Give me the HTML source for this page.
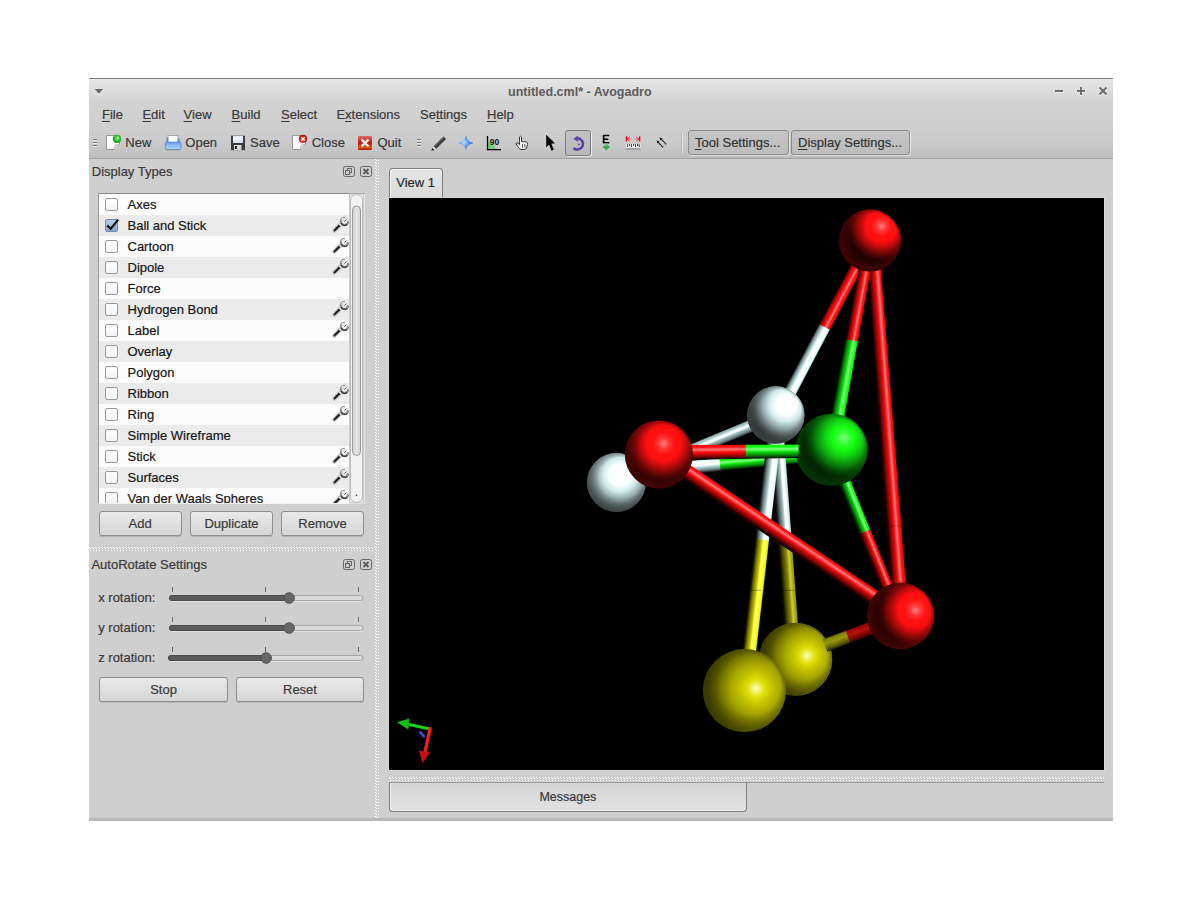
<!DOCTYPE html><html><head><meta charset="utf-8"><style>
html,body{margin:0;padding:0;}
body{width:1200px;height:900px;position:relative;overflow:hidden;background:#ffffff;font-family:"Liberation Sans",sans-serif;}
.t{position:absolute;white-space:nowrap;-webkit-text-stroke:0.2px currentColor;}
.a{position:absolute;}
u{text-decoration:underline;text-underline-offset:2px;}
.btn{position:absolute;box-sizing:border-box;border:1px solid #8e8e8e;border-radius:3px;background:linear-gradient(#e9e9e9,#d6d6d6);box-shadow:0 1px 0 rgba(0,0,0,0.12);}
.chk{position:absolute;box-sizing:border-box;width:13px;height:13px;border:1px solid #9a9a9a;border-radius:2px;background:linear-gradient(#ffffff,#f4f4f4);}
svg{position:absolute;overflow:visible;}
</style></head><body>

<div class="a" style="left:89px;top:78px;width:1024px;height:743px;background:#cfcfcf;"></div>
<div class="a" style="left:89px;top:78px;width:1024px;height:1px;background:#7c7c7c;"></div>
<div class="a" style="left:89px;top:79px;width:1024px;height:79px;background:linear-gradient(#f0f0f0 0px,#e4e4e4 1px,#dedede 10px,#d3d3d3 22px,#cfcfcf 45px,#cbcbcb 62px,#c4c4c4 72px,#bcbcbc 79px);"></div>
<div class="a" style="left:89px;top:158px;width:1024px;height:1px;background:#a2a2a2;"></div>
<div class="a" style="left:89px;top:818px;width:1024px;height:3px;background:#b8b8b8;"></div>
<div class="t" style="left:508px;top:84.37px;font-size:12.5px;line-height:16px;color:#5c5c5c;font-weight:bold;-webkit-text-stroke:0;">untitled.cml* - Avogadro</div>
<svg style="left:94px;top:88px" width="11" height="9"><path d="M1.2 5.6 L5 7.4 L8.8 5.6" fill="none" stroke="#f4f4f4" stroke-width="0.8" opacity="0.8"/><path d="M0.7 1 L9.1 1 L4.9 5.4 Z" fill="#6a6a6a"/></svg>
<svg style="left:1052px;top:84px" width="60" height="16"><g stroke="#ffffff" stroke-width="2" opacity="0.7" transform="translate(0,1)"><path d="M3 7 H11"/><path d="M25 7 H33 M29 3 V11"/><path d="M47.5 3.5 L54.5 10.5 M54.5 3.5 L47.5 10.5"/></g><g stroke="#6e6e6e" stroke-width="2"><path d="M3 7 H11"/><path d="M25 7 H33 M29 3 V11"/><path d="M47.5 3.5 L54.5 10.5 M54.5 3.5 L47.5 10.5"/></g></svg>
<div class="t" style="left:102px;top:107.20px;font-size:13px;line-height:16px;color:#393939;font-weight:normal;"><u>F</u>ile</div>
<div class="t" style="left:142.4px;top:107.20px;font-size:13px;line-height:16px;color:#393939;font-weight:normal;"><u>E</u>dit</div>
<div class="t" style="left:183.6px;top:107.20px;font-size:13px;line-height:16px;color:#393939;font-weight:normal;"><u>V</u>iew</div>
<div class="t" style="left:231.6px;top:107.20px;font-size:13px;line-height:16px;color:#393939;font-weight:normal;"><u>B</u>uild</div>
<div class="t" style="left:281px;top:107.20px;font-size:13px;line-height:16px;color:#393939;font-weight:normal;"><u>S</u>elect</div>
<div class="t" style="left:336.4px;top:107.20px;font-size:13px;line-height:16px;color:#393939;font-weight:normal;">E<u>x</u>tensions</div>
<div class="t" style="left:420px;top:107.20px;font-size:13px;line-height:16px;color:#393939;font-weight:normal;">Se<u>t</u>tings</div>
<div class="t" style="left:487px;top:107.20px;font-size:13px;line-height:16px;color:#393939;font-weight:normal;"><u>H</u>elp</div>
<svg style="left:93px;top:139px" width="6" height="10"><g fill="#7a7a7a"><rect x="0" y="0" width="4" height="1"/><rect x="0" y="3" width="4" height="1"/><rect x="0" y="6" width="4" height="1"/></g><g fill="#ececec"><rect x="0" y="1" width="4" height="1"/><rect x="0" y="4" width="4" height="1"/><rect x="0" y="7" width="4" height="1"/></g></svg>
<svg style="left:417px;top:139px" width="6" height="10"><g fill="#7a7a7a"><rect x="0" y="0" width="4" height="1"/><rect x="0" y="3" width="4" height="1"/><rect x="0" y="6" width="4" height="1"/></g><g fill="#ececec"><rect x="0" y="1" width="4" height="1"/><rect x="0" y="4" width="4" height="1"/><rect x="0" y="7" width="4" height="1"/></g></svg>
<div class="t" style="left:125.3px;top:135.20px;font-size:13px;line-height:16px;color:#393939;font-weight:normal;">New</div>
<div class="t" style="left:185.3px;top:135.20px;font-size:13px;line-height:16px;color:#393939;font-weight:normal;">Open</div>
<div class="t" style="left:250px;top:135.20px;font-size:13px;line-height:16px;color:#393939;font-weight:normal;">Save</div>
<div class="t" style="left:311.7px;top:135.20px;font-size:13px;line-height:16px;color:#393939;font-weight:normal;">Close</div>
<div class="t" style="left:377.5px;top:135.20px;font-size:13px;line-height:16px;color:#393939;font-weight:normal;">Quit</div>
<svg style="left:105px;top:134px" width="18" height="18">
<path d="M1.5 1.5 H11 L14.5 5 V10.5 L9.5 15.5 H1.5 Z" fill="#fbfbfb" stroke="#9a9a9a" stroke-width="1"/>
<path d="M9.5 15.5 L10 11 L14.5 10.5" fill="#e6e6e6" stroke="#a8a8a8" stroke-width="0.8"/>
<defs><radialGradient id="gN" cx="0.55" cy="0.4" r="0.6"><stop offset="0" stop-color="#c8f0c0"/><stop offset="0.45" stop-color="#3cc83c"/><stop offset="1" stop-color="#0a9a0a"/></radialGradient></defs>
<circle cx="12" cy="4.9" r="4.1" fill="url(#gN)"/>
</svg>
<svg style="left:164px;top:134px" width="18" height="18">
<rect x="4" y="1.5" width="10" height="7" fill="#fcfcfc" stroke="#9c9c9c" stroke-width="0.8"/>
<rect x="2.3" y="3.5" width="2" height="5" fill="#5a90e0"/><rect x="13.7" y="4.5" width="2" height="4" fill="#5a90e0"/>
<defs><linearGradient id="gO" x1="0" y1="0" x2="0" y2="1"><stop offset="0" stop-color="#6a9ee6"/><stop offset="0.5" stop-color="#8fbdf4"/><stop offset="1" stop-color="#a9d2fa"/></linearGradient></defs>
<rect x="1.3" y="8" width="15.6" height="7.6" rx="1" fill="url(#gO)" stroke="#4f84d4" stroke-width="0.7"/>
<rect x="2" y="15.2" width="14.2" height="1" fill="#7a8aa0"/>
</svg>
<svg style="left:230px;top:134px" width="18" height="18">
<rect x="1" y="1.7" width="14" height="14.5" fill="#3c3a3a"/>
<defs><linearGradient id="gS" x1="0" y1="0" x2="0" y2="1"><stop offset="0" stop-color="#dde6f2"/><stop offset="0.4" stop-color="#f6f8fb"/><stop offset="1" stop-color="#c9d6e6"/></linearGradient></defs>
<rect x="3" y="2" width="10" height="7" fill="url(#gS)"/>
<rect x="4" y="11" width="7.5" height="5.2" fill="#d8d8d8"/>
<rect x="5" y="12" width="1.8" height="3" fill="#111"/>
</svg>
<svg style="left:291px;top:134px" width="18" height="18">
<path d="M1.5 1.5 H10.5 L14.5 5 V10.5 L9.5 15.5 H1.5 Z" fill="#fbfbfb" stroke="#9a9a9a" stroke-width="1"/>
<path d="M9.5 15.5 L10 11 L14.5 10.5" fill="#e6e6e6" stroke="#a8a8a8" stroke-width="0.8"/>
<defs><radialGradient id="gC" cx="0.5" cy="0.6" r="0.6"><stop offset="0" stop-color="#f08020"/><stop offset="0.6" stop-color="#d42020"/><stop offset="1" stop-color="#b00000"/></radialGradient></defs>
<circle cx="12" cy="4.9" r="4.1" fill="url(#gC)"/>
<path d="M10.2 3.1 L13.8 6.7 M13.8 3.1 L10.2 6.7" stroke="#fff" stroke-width="1.2"/>
</svg>
<svg style="left:357px;top:134px" width="18" height="18">
<defs><linearGradient id="gQ" x1="0" y1="0" x2="0" y2="1"><stop offset="0" stop-color="#e06a6a"/><stop offset="0.5" stop-color="#b81a10"/><stop offset="0.8" stop-color="#e85a10"/><stop offset="1" stop-color="#b01000"/></linearGradient></defs>
<rect x="1" y="2" width="14" height="14" rx="1" fill="url(#gQ)"/>
<path d="M4.5 5.5 L11.5 12.5 M11.5 5.5 L4.5 12.5" stroke="#f4f4f4" stroke-width="2.4"/>
</svg>
<svg style="left:430px;top:134px" width="18" height="18">
<path d="M3.5 12.5 L13.5 2.5 L16 5 L6 15 Z" fill="#3a3a3a"/>
<path d="M3.5 12.5 L13.5 2.5 L14.3 3.3 L4.3 13.3 Z" fill="#6a6a6a"/>
<path d="M3.5 12.5 L6 15 L4.5 16 L2.5 14 Z" fill="#e8e8e8"/>
<path d="M2.5 14 L4.5 16 L1.2 16.8 Z" fill="#1a1a1a"/>
</svg>
<svg style="left:457px;top:134px" width="18" height="18">
<defs><radialGradient id="gStar" cx="0.38" cy="0.48" r="0.55"><stop offset="0" stop-color="#c0e4ff"/><stop offset="0.5" stop-color="#5a9cf0"/><stop offset="1" stop-color="#2a6ad8"/></radialGradient></defs>
<path d="M9 1.2 Q9.6 7.4 16.6 9 Q9.8 10.2 9 16.4 Q8.2 10.2 1.2 9 Q8.3 7.6 9 1.2 Z" fill="url(#gStar)"/>
</svg>
<svg style="left:486px;top:134px" width="18" height="18">
<path d="M1.8 6 L1.8 15 L11 15 Z" fill="#6fd46f"/>
<path d="M1.5 2 V15.6 H15" fill="none" stroke="#000" stroke-width="1.3"/>
<text x="3.8" y="11.3" font-family="Liberation Sans" font-weight="bold" font-size="8.5" fill="#111">90</text>
</svg>
<svg style="left:514px;top:134px" width="18" height="18">
<path d="M5.5 7.5 V3 Q6.5 1.5 7.5 3 V7.5 L12.5 8 Q14 8.5 13.5 10.5 L12.5 14 Q12 15.5 10 15.5 H7 Q5.5 15 4.5 13.5 L2 10 Q1.8 8.5 3.5 9 L5.5 10.5 Z" fill="#f6f6f2" stroke="#333" stroke-width="1"/>
<path d="M8.5 10 V13.5 M10.8 10 V13.5" stroke="#555" stroke-width="1"/>
</svg>
<svg style="left:544px;top:133px" width="14" height="20">
<path d="M2.2 1.8 V14.6 L5 11.6 L7.6 17.8 L9.8 16.6 L7.4 10.8 L11 10.3 Z" fill="#000"/>
</svg>
<div class="a" style="left:565px;top:130px;width:26px;height:26px;box-sizing:border-box;border:1px solid #7c7c7c;border-radius:3px;background:linear-gradient(#c2c2c2,#b9b9b9);box-shadow:1px 1px 0 rgba(255,255,255,0.6);"></div>
<svg style="left:570px;top:135px" width="18" height="18">
<path d="M7.3 3.3 A5.6 5.6 0 1 1 3.6 13" fill="none" stroke="#5a3fa0" stroke-width="2.6"/>
<path d="M3.2 4.1 L8 0.6 L8.3 6.8 Z" fill="#5f45a8"/>
<circle cx="9" cy="9.3" r="0.9" fill="#5a3fa0"/>
</svg>
<svg style="left:600px;top:134px" width="14" height="18">
<path d="M3.2 1.5 H9.3 M3.2 5.2 H8.3 M3.2 8.7 H9.3 M3.6 1 V9.3" stroke="#000" stroke-width="1.6" fill="none"/>
<defs><linearGradient id="gE" x1="0" y1="0" x2="0" y2="1"><stop offset="0" stop-color="#9fd49f"/><stop offset="0.5" stop-color="#2e9e3e"/><stop offset="1" stop-color="#60d080"/></linearGradient></defs>
<path d="M4.5 9.5 H8.2 V12.3 H10.3 L6.3 17 L2.3 12.3 H4.5 Z" fill="url(#gE)"/>
</svg>
<svg style="left:624px;top:134px" width="20" height="18">
<g stroke="#ee1010" fill="none"><path d="M2.4 2.3 V7.6 M15.6 2.3 V7.6" stroke-width="1.4"/><path d="M3 5 H7.6 M10.4 5 H15" stroke-width="0.9" stroke="#f06070"/><path d="M5.5 3 L3.2 5 L5.5 7 M12.5 3 L14.8 5 L12.5 7" stroke-width="0.9"/></g>
<rect x="2" y="10" width="14.5" height="5.2" fill="#f2f2f6"/>
<g stroke="#333" stroke-width="0.9"><path d="M3.5 10 V13 M5.5 10 V12 M7.5 10 V13 M9.5 10 V12 M11.5 10 V13 M13.5 10 V12 M15.2 10 V13"/></g>
<rect x="2" y="14.2" width="14.5" height="1.4" fill="#888894"/>
</svg>
<svg style="left:654px;top:135px" width="16" height="16">
<path d="M3.8 7 L9.2 12.5 M6.9 3.8 L12.4 9.4" stroke="#141414" stroke-width="1.4" stroke-dasharray="1.1 0.5"/><path d="M2.6 5.6 L5.6 6.4 L3.4 8.6 Z M5.6 2.6 L8.6 3.4 L6.4 5.6 Z" fill="#141414"/>
</svg>
<div class="a" style="left:681px;top:133px;width:1px;height:20px;background:#b8b8b8;"></div><div class="a" style="left:682px;top:133px;width:1px;height:20px;background:#e2e2e2;"></div>
<div class="a" style="left:688px;top:130px;width:101px;height:25px;box-sizing:border-box;border:1px solid #8c8c8c;border-radius:3px;background:linear-gradient(#c6c6c6,#bcbcbc);box-shadow:1px 1px 0 rgba(255,255,255,0.5);"></div>
<div class="a" style="left:791px;top:130px;width:119px;height:25px;box-sizing:border-box;border:1px solid #8c8c8c;border-radius:3px;background:linear-gradient(#c6c6c6,#bcbcbc);box-shadow:1px 1px 0 rgba(255,255,255,0.5);"></div>
<div class="t" style="left:695px;top:135.30px;font-size:13px;line-height:16px;color:#333333;font-weight:normal;"><u>T</u>ool Settings...</div>
<div class="t" style="left:798px;top:135.30px;font-size:13px;line-height:16px;color:#333333;font-weight:normal;"><u>D</u>isplay Settings...</div>
<div class="t" style="left:91.75px;top:164.20px;font-size:13px;line-height:16px;color:#3a3a3a;font-weight:normal;">Display Types</div>
<svg style="left:343px;top:166px" width="30" height="12">
<rect x="0.5" y="0.5" width="11" height="10" rx="2" fill="none" stroke="#666" stroke-width="1"/>
<rect x="4.5" y="2.5" width="4" height="4" fill="none" stroke="#666" stroke-width="1"/>
<rect x="2.5" y="4.5" width="4" height="4" fill="#cfcfcf" stroke="#666" stroke-width="1"/>
<rect x="17.5" y="0.5" width="11" height="10" rx="2" fill="none" stroke="#666" stroke-width="1"/>
<path d="M20.5 3 L25.5 8 M25.5 3 L20.5 8" stroke="#5a5a5a" stroke-width="1.8"/>
</svg>
<div class="a" style="left:98px;top:193px;width:267px;height:311px;box-sizing:border-box;border:1px solid #9a9a9a;border-bottom-color:#f4f4f4;border-right-color:#e6e6e6;border-top-color:#8a8a8a;background:#fcfcfc;overflow:hidden;"></div>
<div class="a" style="left:99px;top:194px;width:250px;height:309px;overflow:hidden;">
<div class="a" style="left:0;top:0px;width:260px;height:21px;background:#fcfcfc;"></div>
<div class="chk" style="left:6px;top:4px;"></div>
<div class="t" style="left:28.5px;top:3.20px;font-size:13px;line-height:16px;color:#161616;">Axes</div>
<div class="a" style="left:0;top:21px;width:260px;height:21px;background:#ebebeb;"></div>
<div class="a" style="left:6px;top:25px;width:13px;height:13px;box-sizing:border-box;border:1px solid #6f8bb0;border-radius:2px;background:linear-gradient(#b9cde6,#89a8cf);"></div>
<svg style="left:6px;top:23px" width="16" height="16"><path d="M2.3 8.6 L5.6 12 L13.2 2.6" fill="none" stroke="#000" stroke-width="2.1"/></svg>
<div class="t" style="left:28.5px;top:24.20px;font-size:13px;line-height:16px;color:#161616;">Ball and Stick</div>
<svg style="left:233px;top:23px" width="17" height="17">
<path d="M2.3 13.7 L8.3 7.7" stroke="#b0b0b0" stroke-width="4" stroke-linecap="round"/>
<path d="M2.6 13.4 L8 8" stroke="#1c1c1c" stroke-width="1.9" stroke-linecap="round"/>
<path d="M7.6 8.4 L9.6 6.4" stroke="#e8e8e8" stroke-width="2.2"/>
<path d="M16.1 4.2 A3.6 3.6 0 1 1 12.8 0.9" fill="none" stroke="#8a8a8a" stroke-width="2.3"/><path d="M15 7.6 A3.6 3.6 0 0 1 9.3 6" fill="none" stroke="#404040" stroke-width="1.3"/>
<path d="M9.6 3.6 A3.2 3.2 0 0 1 12.6 1.2" fill="none" stroke="#f4f4f4" stroke-width="1.2"/>
<path d="M12.4 4.6 L14.4 2.6" stroke="#505050" stroke-width="1"/>
</svg>
<div class="a" style="left:0;top:42px;width:260px;height:21px;background:#fcfcfc;"></div>
<div class="chk" style="left:6px;top:46px;"></div>
<div class="t" style="left:28.5px;top:45.20px;font-size:13px;line-height:16px;color:#161616;">Cartoon</div>
<svg style="left:233px;top:44px" width="17" height="17">
<path d="M2.3 13.7 L8.3 7.7" stroke="#b0b0b0" stroke-width="4" stroke-linecap="round"/>
<path d="M2.6 13.4 L8 8" stroke="#1c1c1c" stroke-width="1.9" stroke-linecap="round"/>
<path d="M7.6 8.4 L9.6 6.4" stroke="#e8e8e8" stroke-width="2.2"/>
<path d="M16.1 4.2 A3.6 3.6 0 1 1 12.8 0.9" fill="none" stroke="#8a8a8a" stroke-width="2.3"/><path d="M15 7.6 A3.6 3.6 0 0 1 9.3 6" fill="none" stroke="#404040" stroke-width="1.3"/>
<path d="M9.6 3.6 A3.2 3.2 0 0 1 12.6 1.2" fill="none" stroke="#f4f4f4" stroke-width="1.2"/>
<path d="M12.4 4.6 L14.4 2.6" stroke="#505050" stroke-width="1"/>
</svg>
<div class="a" style="left:0;top:63px;width:260px;height:21px;background:#ebebeb;"></div>
<div class="chk" style="left:6px;top:67px;"></div>
<div class="t" style="left:28.5px;top:66.20px;font-size:13px;line-height:16px;color:#161616;">Dipole</div>
<svg style="left:233px;top:65px" width="17" height="17">
<path d="M2.3 13.7 L8.3 7.7" stroke="#b0b0b0" stroke-width="4" stroke-linecap="round"/>
<path d="M2.6 13.4 L8 8" stroke="#1c1c1c" stroke-width="1.9" stroke-linecap="round"/>
<path d="M7.6 8.4 L9.6 6.4" stroke="#e8e8e8" stroke-width="2.2"/>
<path d="M16.1 4.2 A3.6 3.6 0 1 1 12.8 0.9" fill="none" stroke="#8a8a8a" stroke-width="2.3"/><path d="M15 7.6 A3.6 3.6 0 0 1 9.3 6" fill="none" stroke="#404040" stroke-width="1.3"/>
<path d="M9.6 3.6 A3.2 3.2 0 0 1 12.6 1.2" fill="none" stroke="#f4f4f4" stroke-width="1.2"/>
<path d="M12.4 4.6 L14.4 2.6" stroke="#505050" stroke-width="1"/>
</svg>
<div class="a" style="left:0;top:84px;width:260px;height:21px;background:#fcfcfc;"></div>
<div class="chk" style="left:6px;top:88px;"></div>
<div class="t" style="left:28.5px;top:87.20px;font-size:13px;line-height:16px;color:#161616;">Force</div>
<div class="a" style="left:0;top:105px;width:260px;height:21px;background:#ebebeb;"></div>
<div class="chk" style="left:6px;top:109px;"></div>
<div class="t" style="left:28.5px;top:108.20px;font-size:13px;line-height:16px;color:#161616;">Hydrogen Bond</div>
<svg style="left:233px;top:107px" width="17" height="17">
<path d="M2.3 13.7 L8.3 7.7" stroke="#b0b0b0" stroke-width="4" stroke-linecap="round"/>
<path d="M2.6 13.4 L8 8" stroke="#1c1c1c" stroke-width="1.9" stroke-linecap="round"/>
<path d="M7.6 8.4 L9.6 6.4" stroke="#e8e8e8" stroke-width="2.2"/>
<path d="M16.1 4.2 A3.6 3.6 0 1 1 12.8 0.9" fill="none" stroke="#8a8a8a" stroke-width="2.3"/><path d="M15 7.6 A3.6 3.6 0 0 1 9.3 6" fill="none" stroke="#404040" stroke-width="1.3"/>
<path d="M9.6 3.6 A3.2 3.2 0 0 1 12.6 1.2" fill="none" stroke="#f4f4f4" stroke-width="1.2"/>
<path d="M12.4 4.6 L14.4 2.6" stroke="#505050" stroke-width="1"/>
</svg>
<div class="a" style="left:0;top:126px;width:260px;height:21px;background:#fcfcfc;"></div>
<div class="chk" style="left:6px;top:130px;"></div>
<div class="t" style="left:28.5px;top:129.20px;font-size:13px;line-height:16px;color:#161616;">Label</div>
<svg style="left:233px;top:128px" width="17" height="17">
<path d="M2.3 13.7 L8.3 7.7" stroke="#b0b0b0" stroke-width="4" stroke-linecap="round"/>
<path d="M2.6 13.4 L8 8" stroke="#1c1c1c" stroke-width="1.9" stroke-linecap="round"/>
<path d="M7.6 8.4 L9.6 6.4" stroke="#e8e8e8" stroke-width="2.2"/>
<path d="M16.1 4.2 A3.6 3.6 0 1 1 12.8 0.9" fill="none" stroke="#8a8a8a" stroke-width="2.3"/><path d="M15 7.6 A3.6 3.6 0 0 1 9.3 6" fill="none" stroke="#404040" stroke-width="1.3"/>
<path d="M9.6 3.6 A3.2 3.2 0 0 1 12.6 1.2" fill="none" stroke="#f4f4f4" stroke-width="1.2"/>
<path d="M12.4 4.6 L14.4 2.6" stroke="#505050" stroke-width="1"/>
</svg>
<div class="a" style="left:0;top:147px;width:260px;height:21px;background:#ebebeb;"></div>
<div class="chk" style="left:6px;top:151px;"></div>
<div class="t" style="left:28.5px;top:150.20px;font-size:13px;line-height:16px;color:#161616;">Overlay</div>
<div class="a" style="left:0;top:168px;width:260px;height:21px;background:#fcfcfc;"></div>
<div class="chk" style="left:6px;top:172px;"></div>
<div class="t" style="left:28.5px;top:171.20px;font-size:13px;line-height:16px;color:#161616;">Polygon</div>
<div class="a" style="left:0;top:189px;width:260px;height:21px;background:#ebebeb;"></div>
<div class="chk" style="left:6px;top:193px;"></div>
<div class="t" style="left:28.5px;top:192.20px;font-size:13px;line-height:16px;color:#161616;">Ribbon</div>
<svg style="left:233px;top:191px" width="17" height="17">
<path d="M2.3 13.7 L8.3 7.7" stroke="#b0b0b0" stroke-width="4" stroke-linecap="round"/>
<path d="M2.6 13.4 L8 8" stroke="#1c1c1c" stroke-width="1.9" stroke-linecap="round"/>
<path d="M7.6 8.4 L9.6 6.4" stroke="#e8e8e8" stroke-width="2.2"/>
<path d="M16.1 4.2 A3.6 3.6 0 1 1 12.8 0.9" fill="none" stroke="#8a8a8a" stroke-width="2.3"/><path d="M15 7.6 A3.6 3.6 0 0 1 9.3 6" fill="none" stroke="#404040" stroke-width="1.3"/>
<path d="M9.6 3.6 A3.2 3.2 0 0 1 12.6 1.2" fill="none" stroke="#f4f4f4" stroke-width="1.2"/>
<path d="M12.4 4.6 L14.4 2.6" stroke="#505050" stroke-width="1"/>
</svg>
<div class="a" style="left:0;top:210px;width:260px;height:21px;background:#fcfcfc;"></div>
<div class="chk" style="left:6px;top:214px;"></div>
<div class="t" style="left:28.5px;top:213.20px;font-size:13px;line-height:16px;color:#161616;">Ring</div>
<svg style="left:233px;top:212px" width="17" height="17">
<path d="M2.3 13.7 L8.3 7.7" stroke="#b0b0b0" stroke-width="4" stroke-linecap="round"/>
<path d="M2.6 13.4 L8 8" stroke="#1c1c1c" stroke-width="1.9" stroke-linecap="round"/>
<path d="M7.6 8.4 L9.6 6.4" stroke="#e8e8e8" stroke-width="2.2"/>
<path d="M16.1 4.2 A3.6 3.6 0 1 1 12.8 0.9" fill="none" stroke="#8a8a8a" stroke-width="2.3"/><path d="M15 7.6 A3.6 3.6 0 0 1 9.3 6" fill="none" stroke="#404040" stroke-width="1.3"/>
<path d="M9.6 3.6 A3.2 3.2 0 0 1 12.6 1.2" fill="none" stroke="#f4f4f4" stroke-width="1.2"/>
<path d="M12.4 4.6 L14.4 2.6" stroke="#505050" stroke-width="1"/>
</svg>
<div class="a" style="left:0;top:231px;width:260px;height:21px;background:#ebebeb;"></div>
<div class="chk" style="left:6px;top:235px;"></div>
<div class="t" style="left:28.5px;top:234.20px;font-size:13px;line-height:16px;color:#161616;">Simple Wireframe</div>
<div class="a" style="left:0;top:252px;width:260px;height:21px;background:#fcfcfc;"></div>
<div class="chk" style="left:6px;top:256px;"></div>
<div class="t" style="left:28.5px;top:255.20px;font-size:13px;line-height:16px;color:#161616;">Stick</div>
<svg style="left:233px;top:254px" width="17" height="17">
<path d="M2.3 13.7 L8.3 7.7" stroke="#b0b0b0" stroke-width="4" stroke-linecap="round"/>
<path d="M2.6 13.4 L8 8" stroke="#1c1c1c" stroke-width="1.9" stroke-linecap="round"/>
<path d="M7.6 8.4 L9.6 6.4" stroke="#e8e8e8" stroke-width="2.2"/>
<path d="M16.1 4.2 A3.6 3.6 0 1 1 12.8 0.9" fill="none" stroke="#8a8a8a" stroke-width="2.3"/><path d="M15 7.6 A3.6 3.6 0 0 1 9.3 6" fill="none" stroke="#404040" stroke-width="1.3"/>
<path d="M9.6 3.6 A3.2 3.2 0 0 1 12.6 1.2" fill="none" stroke="#f4f4f4" stroke-width="1.2"/>
<path d="M12.4 4.6 L14.4 2.6" stroke="#505050" stroke-width="1"/>
</svg>
<div class="a" style="left:0;top:273px;width:260px;height:21px;background:#ebebeb;"></div>
<div class="chk" style="left:6px;top:277px;"></div>
<div class="t" style="left:28.5px;top:276.20px;font-size:13px;line-height:16px;color:#161616;">Surfaces</div>
<svg style="left:233px;top:275px" width="17" height="17">
<path d="M2.3 13.7 L8.3 7.7" stroke="#b0b0b0" stroke-width="4" stroke-linecap="round"/>
<path d="M2.6 13.4 L8 8" stroke="#1c1c1c" stroke-width="1.9" stroke-linecap="round"/>
<path d="M7.6 8.4 L9.6 6.4" stroke="#e8e8e8" stroke-width="2.2"/>
<path d="M16.1 4.2 A3.6 3.6 0 1 1 12.8 0.9" fill="none" stroke="#8a8a8a" stroke-width="2.3"/><path d="M15 7.6 A3.6 3.6 0 0 1 9.3 6" fill="none" stroke="#404040" stroke-width="1.3"/>
<path d="M9.6 3.6 A3.2 3.2 0 0 1 12.6 1.2" fill="none" stroke="#f4f4f4" stroke-width="1.2"/>
<path d="M12.4 4.6 L14.4 2.6" stroke="#505050" stroke-width="1"/>
</svg>
<div class="a" style="left:0;top:294px;width:260px;height:21px;background:#fcfcfc;"></div>
<div class="chk" style="left:6px;top:298px;"></div>
<div class="t" style="left:28.5px;top:297.20px;font-size:13px;line-height:16px;color:#161616;">Van der Waals Spheres</div>
<svg style="left:233px;top:296px" width="17" height="17">
<path d="M2.3 13.7 L8.3 7.7" stroke="#b0b0b0" stroke-width="4" stroke-linecap="round"/>
<path d="M2.6 13.4 L8 8" stroke="#1c1c1c" stroke-width="1.9" stroke-linecap="round"/>
<path d="M7.6 8.4 L9.6 6.4" stroke="#e8e8e8" stroke-width="2.2"/>
<path d="M16.1 4.2 A3.6 3.6 0 1 1 12.8 0.9" fill="none" stroke="#8a8a8a" stroke-width="2.3"/><path d="M15 7.6 A3.6 3.6 0 0 1 9.3 6" fill="none" stroke="#404040" stroke-width="1.3"/>
<path d="M9.6 3.6 A3.2 3.2 0 0 1 12.6 1.2" fill="none" stroke="#f4f4f4" stroke-width="1.2"/>
<path d="M12.4 4.6 L14.4 2.6" stroke="#505050" stroke-width="1"/>
</svg>
</div>
<svg style="left:349px;top:194px" width="15" height="309">
<rect x="0" y="0" width="15" height="309" fill="#e8e8e8"/>
<rect x="0.5" y="0" width="14" height="309" fill="none" stroke="#c9c9c9" stroke-width="1"/>
<rect x="1.5" y="0.5" width="12" height="308" rx="6" fill="#f2f2f2" stroke="#bdbdbd" stroke-width="1"/>
<defs><linearGradient id="gSB" x1="0" y1="0" x2="1" y2="0"><stop offset="0" stop-color="#cfcfcf"/><stop offset="0.5" stop-color="#e4e4e4"/><stop offset="1" stop-color="#d2d2d2"/></linearGradient></defs>
<rect x="3.5" y="12" width="8" height="249.5" rx="4" fill="url(#gSB)" stroke="#9a9a9a" stroke-width="1"/>
<rect x="6.8" y="300.6" width="1.4" height="1.4" fill="#444"/>
</svg>
<div class="btn" style="left:99px;top:511px;width:83px;height:25px;"></div>
<div class="t" style="left:128.5px;top:515.70px;font-size:13px;line-height:16px;color:#3a3a3a;font-weight:normal;">Add</div>
<div class="btn" style="left:190px;top:511px;width:83px;height:25px;"></div>
<div class="t" style="left:204.4px;top:515.70px;font-size:13px;line-height:16px;color:#3a3a3a;font-weight:normal;">Duplicate</div>
<div class="btn" style="left:281px;top:511px;width:83px;height:25px;"></div>
<div class="t" style="left:298.3px;top:515.70px;font-size:13px;line-height:16px;color:#3a3a3a;font-weight:normal;">Remove</div>
<svg style="left:89px;top:547px" width="286" height="4"><defs><pattern id="hd89547" width="3" height="4" patternUnits="userSpaceOnUse">
<rect x="0" y="0" width="1" height="1" fill="#ffffff"/><rect x="1" y="1" width="1" height="1" fill="#ffffff"/><rect x="1" y="3" width="1" height="1" fill="#ffffff"/></pattern></defs>
<rect x="0" y="0" width="286" height="4" fill="url(#hd89547)"/></svg>
<svg style="left:375px;top:159px" width="4" height="659"><defs><pattern id="vd375159" width="4" height="3" patternUnits="userSpaceOnUse">
<rect x="0" y="0" width="1" height="1" fill="#ffffff"/><rect x="1" y="1" width="1" height="1" fill="#ffffff"/><rect x="3" y="1" width="1" height="1" fill="#ffffff"/></pattern></defs>
<rect x="0" y="0" width="4" height="659" fill="url(#vd375159)"/></svg>
<div class="t" style="left:91.4px;top:556.80px;font-size:13px;line-height:16px;color:#3a3a3a;font-weight:normal;">AutoRotate Settings</div>
<svg style="left:343px;top:559px" width="30" height="12">
<rect x="0.5" y="0.5" width="11" height="10" rx="2" fill="none" stroke="#666" stroke-width="1"/>
<rect x="4.5" y="2.5" width="4" height="4" fill="none" stroke="#666" stroke-width="1"/>
<rect x="2.5" y="4.5" width="4" height="4" fill="#cfcfcf" stroke="#666" stroke-width="1"/>
<rect x="17.5" y="0.5" width="11" height="10" rx="2" fill="none" stroke="#666" stroke-width="1"/>
<path d="M20.5 3 L25.5 8 M25.5 3 L20.5 8" stroke="#5a5a5a" stroke-width="1.8"/>
</svg>
<div class="t" style="left:98.2px;top:590.10px;font-size:13px;line-height:16px;color:#3a3a3a;font-weight:normal;">x rotation:</div>
<svg style="left:169px;top:587.4px" width="196" height="20">
<rect x="3" y="0" width="1" height="5" fill="#6a6a6a"/><rect x="96" y="0" width="1" height="5" fill="#6a6a6a"/><rect x="189" y="0" width="1" height="5" fill="#6a6a6a"/>
<rect x="0.5" y="8.5" width="119.60000000000002" height="5" rx="2.5" fill="#5c5c5c" stroke="#4a4a4a" stroke-width="1"/>
<rect x="119.60000000000002" y="8.5" width="74.39999999999998" height="5" rx="2.5" fill="#dadada" stroke="#a6a6a6" stroke-width="1"/>
<rect x="0.5" y="8.5" width="119.60000000000002" height="5" rx="2.5" fill="#5c5c5c" stroke="#4a4a4a" stroke-width="1"/>
<path d="M2 14.5 H193" stroke="#f0f0f0" stroke-width="1" opacity="0.6"/>
<circle cx="120.10000000000002" cy="11" r="5.3" fill="#666666" stroke="#505050" stroke-width="1"/>
</svg>
<div class="t" style="left:98.2px;top:619.80px;font-size:13px;line-height:16px;color:#3a3a3a;font-weight:normal;">y rotation:</div>
<svg style="left:169px;top:617.4px" width="196" height="20">
<rect x="3" y="0" width="1" height="5" fill="#6a6a6a"/><rect x="96" y="0" width="1" height="5" fill="#6a6a6a"/><rect x="189" y="0" width="1" height="5" fill="#6a6a6a"/>
<rect x="0.5" y="8.5" width="119.60000000000002" height="5" rx="2.5" fill="#5c5c5c" stroke="#4a4a4a" stroke-width="1"/>
<rect x="119.60000000000002" y="8.5" width="74.39999999999998" height="5" rx="2.5" fill="#dadada" stroke="#a6a6a6" stroke-width="1"/>
<rect x="0.5" y="8.5" width="119.60000000000002" height="5" rx="2.5" fill="#5c5c5c" stroke="#4a4a4a" stroke-width="1"/>
<path d="M2 14.5 H193" stroke="#f0f0f0" stroke-width="1" opacity="0.6"/>
<circle cx="120.10000000000002" cy="11" r="5.3" fill="#666666" stroke="#505050" stroke-width="1"/>
</svg>
<div class="t" style="left:98.2px;top:649.50px;font-size:13px;line-height:16px;color:#3a3a3a;font-weight:normal;">z rotation:</div>
<svg style="left:168px;top:647.4px" width="196" height="20">
<rect x="4" y="0" width="1" height="5" fill="#6a6a6a"/><rect x="97" y="0" width="1" height="5" fill="#6a6a6a"/><rect x="190" y="0" width="1" height="5" fill="#6a6a6a"/>
<rect x="0.5" y="8.5" width="97.60000000000002" height="5" rx="2.5" fill="#5c5c5c" stroke="#4a4a4a" stroke-width="1"/>
<rect x="97.60000000000002" y="8.5" width="97.39999999999998" height="5" rx="2.5" fill="#dadada" stroke="#a6a6a6" stroke-width="1"/>
<rect x="0.5" y="8.5" width="97.60000000000002" height="5" rx="2.5" fill="#5c5c5c" stroke="#4a4a4a" stroke-width="1"/>
<path d="M2 14.5 H193" stroke="#f0f0f0" stroke-width="1" opacity="0.6"/>
<circle cx="98.10000000000002" cy="11" r="5.3" fill="#666666" stroke="#505050" stroke-width="1"/>
</svg>
<div class="btn" style="left:99px;top:677px;width:129px;height:25px;"></div>
<div class="t" style="left:150.125px;top:681.70px;font-size:13px;line-height:16px;color:#3a3a3a;font-weight:normal;">Stop</div>
<div class="btn" style="left:236px;top:677px;width:128px;height:25px;"></div>
<div class="t" style="left:283.0px;top:681.70px;font-size:13px;line-height:16px;color:#3a3a3a;font-weight:normal;">Reset</div>
<div class="a" style="left:389px;top:168px;width:54px;height:31px;box-sizing:border-box;border:1px solid #7e7e7e;border-bottom:none;border-radius:4px 4px 0 0;background:linear-gradient(#e6e6e6,#d9d9d9);box-shadow:inset 1px 1px 0 #f6f6f6;"></div>
<div class="t" style="left:396.3px;top:174.50px;font-size:13px;line-height:16px;color:#2a2a2a;font-weight:normal;">View 1</div>
<div class="a" style="left:388px;top:197px;width:717px;height:574px;background:#d7d7d7;"></div>
<div class="a" style="left:389px;top:198px;width:715px;height:572px;background:#000;overflow:hidden;" id="gl"></div>
<svg style="left:389px;top:777px" width="715" height="4"><defs><pattern id="hd389777" width="3" height="4" patternUnits="userSpaceOnUse">
<rect x="0" y="0" width="1" height="1" fill="#ffffff"/><rect x="1" y="1" width="1" height="1" fill="#ffffff"/><rect x="1" y="3" width="1" height="1" fill="#ffffff"/></pattern></defs>
<rect x="0" y="0" width="715" height="4" fill="url(#hd389777)"/></svg>
<div class="a" style="left:389px;top:782px;width:715px;height:1px;background:#9c9c9c;"></div>
<div class="a" style="left:389px;top:783px;width:358px;height:29px;box-sizing:border-box;border:1px solid #7e7e7e;border-top:none;border-radius:0 0 4px 4px;background:linear-gradient(#d4d4d4,#e2e2e2);box-shadow:inset 1px -1px 0 #f0f0f0;"></div>
<div class="t" style="left:539.4px;top:788.97px;font-size:12.5px;line-height:16px;color:#3a3a3a;font-weight:normal;">Messages</div>
<svg style="left:389px;top:198px" width="715" height="572" viewBox="389 198 715 572"><rect x="389" y="198" width="715" height="572" fill="#000"/><linearGradient id="st1" gradientUnits="userSpaceOnUse" x1="893.61" y1="430.47" x2="879.39" y2="431.53"><stop offset="0.000" stop-color="#fa0808"/><stop offset="0.071" stop-color="#ff0a0a"/><stop offset="0.143" stop-color="#ff1111"/><stop offset="0.214" stop-color="#ff4444"/><stop offset="0.286" stop-color="#ff7b7b"/><stop offset="0.357" stop-color="#ff5959"/><stop offset="0.429" stop-color="#ff2020"/><stop offset="0.500" stop-color="#e90a0a"/><stop offset="0.571" stop-color="#cd0707"/><stop offset="0.643" stop-color="#b00606"/><stop offset="0.714" stop-color="#8f0505"/><stop offset="0.786" stop-color="#6b0303"/><stop offset="0.857" stop-color="#410202"/><stop offset="0.929" stop-color="#180101"/><stop offset="1.000" stop-color="#180101"/></linearGradient>
<polygon points="867.77,262.46 891.02,600.59 906.98,599.41 880.23,261.54" fill="url(#st1)"/>
<path d="M885.8 525.9 L900.8 525.9" stroke="#000" stroke-width="0.7" opacity="0.35"/>
<linearGradient id="st2" gradientUnits="userSpaceOnUse" x1="847.78" y1="295.56" x2="837.39" y2="290.06"><stop offset="0.000" stop-color="#ba0606"/><stop offset="0.071" stop-color="#ff0909"/><stop offset="0.143" stop-color="#ff0a0a"/><stop offset="0.214" stop-color="#ff1111"/><stop offset="0.286" stop-color="#ff3d3d"/><stop offset="0.357" stop-color="#ff7777"/><stop offset="0.429" stop-color="#ff6868"/><stop offset="0.500" stop-color="#ff2c2c"/><stop offset="0.571" stop-color="#ff0e0e"/><stop offset="0.643" stop-color="#f20808"/><stop offset="0.714" stop-color="#d80707"/><stop offset="0.786" stop-color="#b90606"/><stop offset="0.857" stop-color="#920505"/><stop offset="0.929" stop-color="#5e0303"/><stop offset="1.000" stop-color="#180101"/></linearGradient>
<polygon points="855.92,255.31 818.87,324.81 829.48,330.43 866.08,260.69" fill="url(#st2)"/>
<linearGradient id="st3" gradientUnits="userSpaceOnUse" x1="811.66" y1="364.36" x2="800.84" y2="358.64"><stop offset="0.000" stop-color="#8aa1a1"/><stop offset="0.071" stop-color="#cbeded"/><stop offset="0.143" stop-color="#dcffff"/><stop offset="0.214" stop-color="#eaffff"/><stop offset="0.286" stop-color="#ffffff"/><stop offset="0.357" stop-color="#ffffff"/><stop offset="0.429" stop-color="#ffffff"/><stop offset="0.500" stop-color="#f3ffff"/><stop offset="0.571" stop-color="#c9e9e9"/><stop offset="0.643" stop-color="#b4d2d2"/><stop offset="0.714" stop-color="#a1bbbb"/><stop offset="0.786" stop-color="#89a0a0"/><stop offset="0.857" stop-color="#6c7e7e"/><stop offset="0.929" stop-color="#465151"/><stop offset="1.000" stop-color="#121515"/></linearGradient>
<polygon points="819.20,324.19 782.48,393.08 793.52,398.92 829.80,329.81" fill="url(#st3)"/>
<linearGradient id="st4" gradientUnits="userSpaceOnUse" x1="864.61" y1="302.63" x2="852.81" y2="300.46"><stop offset="0.000" stop-color="#e70808"/><stop offset="0.071" stop-color="#ff0a0a"/><stop offset="0.143" stop-color="#ff0c0c"/><stop offset="0.214" stop-color="#ff2c2c"/><stop offset="0.286" stop-color="#ff6f6f"/><stop offset="0.357" stop-color="#ff7070"/><stop offset="0.429" stop-color="#ff3434"/><stop offset="0.500" stop-color="#ff1010"/><stop offset="0.571" stop-color="#e30808"/><stop offset="0.643" stop-color="#c80707"/><stop offset="0.714" stop-color="#a90606"/><stop offset="0.786" stop-color="#860404"/><stop offset="0.857" stop-color="#5c0303"/><stop offset="0.929" stop-color="#270101"/><stop offset="1.000" stop-color="#180101"/></linearGradient>
<polygon points="860.35,260.96 845.28,339.96 857.56,342.22 871.65,263.04" fill="url(#st4)"/>
<linearGradient id="st5" gradientUnits="userSpaceOnUse" x1="850.41" y1="382.38" x2="837.64" y2="380.02"><stop offset="0.000" stop-color="#0bca0b"/><stop offset="0.071" stop-color="#0fff0f"/><stop offset="0.143" stop-color="#11ff11"/><stop offset="0.214" stop-color="#31ff31"/><stop offset="0.286" stop-color="#74ff74"/><stop offset="0.357" stop-color="#75ff75"/><stop offset="0.429" stop-color="#38ff38"/><stop offset="0.500" stop-color="#14e314"/><stop offset="0.571" stop-color="#0cc70c"/><stop offset="0.643" stop-color="#0aaf0a"/><stop offset="0.714" stop-color="#089408"/><stop offset="0.786" stop-color="#077507"/><stop offset="0.857" stop-color="#045104"/><stop offset="0.929" stop-color="#022202"/><stop offset="1.000" stop-color="#011601"/></linearGradient>
<polygon points="845.41,339.27 829.86,420.78 843.14,423.22 857.68,341.53" fill="url(#st5)"/>
<radialGradient id="sp6" gradientUnits="userSpaceOnUse" cx="881.78" cy="226.03" r="44.95"><stop offset="0" stop-color="#ff7e7e"/><stop offset="0.12" stop-color="#ff3333"/><stop offset="0.22" stop-color="#ff1313"/><stop offset="0.35" stop-color="#ff0e0e"/><stop offset="0.47" stop-color="#bf0b0b"/><stop offset="0.58" stop-color="#800707"/><stop offset="0.68" stop-color="#460404"/><stop offset="0.76" stop-color="#230202"/><stop offset="0.85" stop-color="#1a0101"/><stop offset="1" stop-color="#1a0101"/></radialGradient><circle cx="870" cy="240.6" r="31" fill="url(#sp6)"/><radialGradient id="rm7" gradientUnits="userSpaceOnUse" cx="870" cy="240.6" r="31" fx="887.05" fy="225.10"><stop offset="0" stop-color="#660606" stop-opacity="0"/><stop offset="0.72" stop-color="#660606" stop-opacity="0"/><stop offset="0.92" stop-color="#660606" stop-opacity="0.4"/><stop offset="1" stop-color="#660606" stop-opacity="0.55"/></radialGradient><circle cx="870" cy="240.6" r="31" fill="url(#rm7)"/>
<linearGradient id="st8" gradientUnits="userSpaceOnUse" x1="679.75" y1="461.69" x2="680.95" y2="475.00"><stop offset="0.000" stop-color="#a4bfbf"/><stop offset="0.071" stop-color="#d9fdfd"/><stop offset="0.143" stop-color="#e4ffff"/><stop offset="0.214" stop-color="#fdffff"/><stop offset="0.286" stop-color="#ffffff"/><stop offset="0.357" stop-color="#ffffff"/><stop offset="0.429" stop-color="#ffffff"/><stop offset="0.500" stop-color="#caeaea"/><stop offset="0.571" stop-color="#b0cdcd"/><stop offset="0.643" stop-color="#9cb5b5"/><stop offset="0.714" stop-color="#869c9c"/><stop offset="0.786" stop-color="#6c7e7e"/><stop offset="0.857" stop-color="#4d5a5a"/><stop offset="0.929" stop-color="#262c2c"/><stop offset="1.000" stop-color="#121515"/></linearGradient>
<polygon points="640.63,478.97 721.27,471.03 720.12,458.34 639.37,465.03" fill="url(#st8)"/>
<linearGradient id="st9" gradientUnits="userSpaceOnUse" x1="759.45" y1="455.09" x2="760.55" y2="467.16"><stop offset="0.000" stop-color="#0bc20b"/><stop offset="0.071" stop-color="#0eff0e"/><stop offset="0.143" stop-color="#10ff10"/><stop offset="0.214" stop-color="#29ff29"/><stop offset="0.286" stop-color="#6aff6a"/><stop offset="0.357" stop-color="#7cff7c"/><stop offset="0.429" stop-color="#44ff44"/><stop offset="0.500" stop-color="#18ed18"/><stop offset="0.571" stop-color="#0ccf0c"/><stop offset="0.643" stop-color="#0ab80a"/><stop offset="0.714" stop-color="#099e09"/><stop offset="0.786" stop-color="#078007"/><stop offset="0.857" stop-color="#055b05"/><stop offset="0.929" stop-color="#032d03"/><stop offset="1.000" stop-color="#011601"/></linearGradient>
<polygon points="720.58,471.10 800.52,463.23 799.48,451.77 719.42,458.40" fill="url(#st9)"/>
<radialGradient id="sp10" gradientUnits="userSpaceOnUse" cx="619.94" cy="474.83" r="48.67"><stop offset="0" stop-color="#ffffff"/><stop offset="0.12" stop-color="#ffffff"/><stop offset="0.22" stop-color="#f9ffff"/><stop offset="0.35" stop-color="#d0ebeb"/><stop offset="0.47" stop-color="#9fb4b4"/><stop offset="0.58" stop-color="#6e7c7c"/><stop offset="0.68" stop-color="#424a4a"/><stop offset="0.76" stop-color="#272c2c"/><stop offset="0.85" stop-color="#1f2424"/><stop offset="1" stop-color="#1f2424"/></radialGradient><circle cx="616.4" cy="482.5" r="29.5" fill="url(#sp10)"/><radialGradient id="rm11" gradientUnits="userSpaceOnUse" cx="616.4" cy="482.5" r="29.5" fx="632.62" fy="467.75"><stop offset="0" stop-color="#4e5959" stop-opacity="0"/><stop offset="0.72" stop-color="#4e5959" stop-opacity="0"/><stop offset="0.92" stop-color="#4e5959" stop-opacity="0.4"/><stop offset="1" stop-color="#4e5959" stop-opacity="0.55"/></radialGradient><circle cx="616.4" cy="482.5" r="29.5" fill="url(#rm11)"/>
<linearGradient id="st12" gradientUnits="userSpaceOnUse" x1="858.97" y1="502.01" x2="847.84" y2="506.50"><stop offset="0.000" stop-color="#0de50d"/><stop offset="0.071" stop-color="#0fff0f"/><stop offset="0.143" stop-color="#1bff1b"/><stop offset="0.214" stop-color="#59ff59"/><stop offset="0.286" stop-color="#80ff80"/><stop offset="0.357" stop-color="#4cff4c"/><stop offset="0.429" stop-color="#1ae21a"/><stop offset="0.500" stop-color="#0cbf0c"/><stop offset="0.571" stop-color="#09a609"/><stop offset="0.643" stop-color="#088c08"/><stop offset="0.714" stop-color="#066f06"/><stop offset="0.786" stop-color="#044e04"/><stop offset="0.857" stop-color="#022902"/><stop offset="0.929" stop-color="#011601"/><stop offset="1.000" stop-color="#011601"/></linearGradient>
<polygon points="836.44,478.25 859.24,534.75 870.37,530.26 847.56,473.75" fill="url(#st12)"/>
<linearGradient id="st13" gradientUnits="userSpaceOnUse" x1="881.83" y1="558.68" x2="870.71" y2="563.18"><stop offset="0.000" stop-color="#ff0909"/><stop offset="0.071" stop-color="#ff0a0a"/><stop offset="0.143" stop-color="#ff1616"/><stop offset="0.214" stop-color="#ff5555"/><stop offset="0.286" stop-color="#ff7b7b"/><stop offset="0.357" stop-color="#ff4848"/><stop offset="0.429" stop-color="#ff1616"/><stop offset="0.500" stop-color="#da0808"/><stop offset="0.571" stop-color="#bd0606"/><stop offset="0.643" stop-color="#9f0505"/><stop offset="0.714" stop-color="#7e0404"/><stop offset="0.786" stop-color="#590303"/><stop offset="0.857" stop-color="#2f0202"/><stop offset="0.929" stop-color="#180101"/><stop offset="1.000" stop-color="#180101"/></linearGradient>
<polygon points="858.98,534.11 882.44,592.25 893.56,587.75 870.10,529.61" fill="url(#st13)"/>
<linearGradient id="st14" gradientUnits="userSpaceOnUse" x1="787.54" y1="483.15" x2="773.92" y2="484.13"><stop offset="0.000" stop-color="#a7c2c2"/><stop offset="0.071" stop-color="#caecec"/><stop offset="0.143" stop-color="#d3f5f5"/><stop offset="0.214" stop-color="#ffffff"/><stop offset="0.286" stop-color="#ffffff"/><stop offset="0.357" stop-color="#ffffff"/><stop offset="0.429" stop-color="#c0dcdc"/><stop offset="0.500" stop-color="#9db6b6"/><stop offset="0.571" stop-color="#899f9f"/><stop offset="0.643" stop-color="#758989"/><stop offset="0.714" stop-color="#607070"/><stop offset="0.786" stop-color="#475353"/><stop offset="0.857" stop-color="#2b3232"/><stop offset="0.929" stop-color="#101313"/><stop offset="1.000" stop-color="#101313"/></linearGradient>
<polygon points="769.77,425.49 778.08,542.77 791.84,541.78 783.23,424.51" fill="url(#st14)"/>
<linearGradient id="st15" gradientUnits="userSpaceOnUse" x1="794.88" y1="583.29" x2="781.03" y2="584.29"><stop offset="0.000" stop-color="#878703"/><stop offset="0.071" stop-color="#a3a303"/><stop offset="0.143" stop-color="#a8a806"/><stop offset="0.214" stop-color="#bbbb1d"/><stop offset="0.286" stop-color="#cece36"/><stop offset="0.357" stop-color="#b6b627"/><stop offset="0.429" stop-color="#93930d"/><stop offset="0.500" stop-color="#7d7d04"/><stop offset="0.571" stop-color="#6e6e02"/><stop offset="0.643" stop-color="#5f5f02"/><stop offset="0.714" stop-color="#4d4d02"/><stop offset="0.786" stop-color="#3a3a01"/><stop offset="0.857" stop-color="#232301"/><stop offset="0.929" stop-color="#0d0d00"/><stop offset="1.000" stop-color="#0d0d00"/></linearGradient>
<polygon points="778.03,542.08 784.02,626.50 797.98,625.50 791.79,541.08" fill="url(#st15)"/>
<linearGradient id="st16" gradientUnits="userSpaceOnUse" x1="775.57" y1="483.56" x2="761.94" y2="481.99"><stop offset="0.000" stop-color="#b0cdcd"/><stop offset="0.071" stop-color="#deffff"/><stop offset="0.143" stop-color="#e7ffff"/><stop offset="0.214" stop-color="#ffffff"/><stop offset="0.286" stop-color="#ffffff"/><stop offset="0.357" stop-color="#ffffff"/><stop offset="0.429" stop-color="#e8ffff"/><stop offset="0.500" stop-color="#bbd8d8"/><stop offset="0.571" stop-color="#a3bebe"/><stop offset="0.643" stop-color="#8fa6a6"/><stop offset="0.714" stop-color="#788b8b"/><stop offset="0.786" stop-color="#5d6c6c"/><stop offset="0.857" stop-color="#3e4848"/><stop offset="0.929" stop-color="#171b1b"/><stop offset="1.000" stop-color="#121515"/></linearGradient>
<polygon points="768.55,424.21 755.33,539.78 768.89,541.34 782.25,425.79" fill="url(#st16)"/>
<linearGradient id="st17" gradientUnits="userSpaceOnUse" x1="762.49" y1="596.71" x2="749.00" y2="595.16"><stop offset="0.000" stop-color="#c1c104"/><stop offset="0.071" stop-color="#f4f405"/><stop offset="0.143" stop-color="#fdfd08"/><stop offset="0.214" stop-color="#ffff2e"/><stop offset="0.286" stop-color="#ffff6f"/><stop offset="0.357" stop-color="#ffff65"/><stop offset="0.429" stop-color="#fcfc29"/><stop offset="0.500" stop-color="#cccc0a"/><stop offset="0.571" stop-color="#b4b404"/><stop offset="0.643" stop-color="#9d9d03"/><stop offset="0.714" stop-color="#838303"/><stop offset="0.786" stop-color="#666602"/><stop offset="0.857" stop-color="#444401"/><stop offset="0.929" stop-color="#191901"/><stop offset="1.000" stop-color="#141400"/></linearGradient>
<polygon points="755.41,539.08 742.59,651.23 756.01,652.77 768.97,540.64" fill="url(#st17)"/>
<path d="M746.8 590.3 L761.2 590.3 M781 590.3 L795.5 590.3" stroke="#000" stroke-width="0.8" opacity="0.4"/>
<linearGradient id="st18" gradientUnits="userSpaceOnUse" x1="713.66" y1="434.79" x2="718.34" y2="446.11"><stop offset="0.000" stop-color="#617171"/><stop offset="0.071" stop-color="#98b1b1"/><stop offset="0.143" stop-color="#a7c3c3"/><stop offset="0.214" stop-color="#b2cfcf"/><stop offset="0.286" stop-color="#d4f1f1"/><stop offset="0.357" stop-color="#ffffff"/><stop offset="0.429" stop-color="#ffffff"/><stop offset="0.500" stop-color="#dbf7f7"/><stop offset="0.571" stop-color="#a9c4c4"/><stop offset="0.643" stop-color="#95adad"/><stop offset="0.714" stop-color="#869c9c"/><stop offset="0.786" stop-color="#758888"/><stop offset="0.857" stop-color="#5f6f6f"/><stop offset="0.929" stop-color="#424c4c"/><stop offset="1.000" stop-color="#0e1111"/></linearGradient>
<polygon points="672.39,465.27 764.30,426.94 759.70,415.86 667.61,453.73" fill="url(#st18)"/>
<radialGradient id="sp19" gradientUnits="userSpaceOnUse" cx="785.84" cy="404.95" r="47.35"><stop offset="0" stop-color="#ffffff"/><stop offset="0.12" stop-color="#ffffff"/><stop offset="0.22" stop-color="#f9ffff"/><stop offset="0.35" stop-color="#d0ebeb"/><stop offset="0.47" stop-color="#9fb4b4"/><stop offset="0.58" stop-color="#6e7c7c"/><stop offset="0.68" stop-color="#424a4a"/><stop offset="0.76" stop-color="#272c2c"/><stop offset="0.85" stop-color="#1f2424"/><stop offset="1" stop-color="#1f2424"/></radialGradient><circle cx="775.8" cy="415" r="28.7" fill="url(#sp19)"/><radialGradient id="rm20" gradientUnits="userSpaceOnUse" cx="775.8" cy="415" r="28.7" fx="791.58" fy="400.65"><stop offset="0" stop-color="#4e5959" stop-opacity="0"/><stop offset="0.72" stop-color="#4e5959" stop-opacity="0"/><stop offset="0.92" stop-color="#4e5959" stop-opacity="0.4"/><stop offset="1" stop-color="#4e5959" stop-opacity="0.55"/></radialGradient><circle cx="775.8" cy="415" r="28.7" fill="url(#rm20)"/>
<radialGradient id="sp21" gradientUnits="userSpaceOnUse" cx="843.74" cy="437.92" r="52.20"><stop offset="0" stop-color="#81ff81"/><stop offset="0.12" stop-color="#35ff35"/><stop offset="0.22" stop-color="#15ff15"/><stop offset="0.35" stop-color="#10d410"/><stop offset="0.47" stop-color="#0c9f0c"/><stop offset="0.58" stop-color="#086a08"/><stop offset="0.68" stop-color="#043a04"/><stop offset="0.76" stop-color="#021d02"/><stop offset="0.85" stop-color="#021502"/><stop offset="1" stop-color="#021502"/></radialGradient><circle cx="831.5" cy="449.8" r="36" fill="url(#sp21)"/><radialGradient id="rm22" gradientUnits="userSpaceOnUse" cx="831.5" cy="449.8" r="36" fx="851.30" fy="431.80"><stop offset="0" stop-color="#065506" stop-opacity="0"/><stop offset="0.72" stop-color="#065506" stop-opacity="0"/><stop offset="0.92" stop-color="#065506" stop-opacity="0.4"/><stop offset="1" stop-color="#065506" stop-opacity="0.55"/></radialGradient><circle cx="831.5" cy="449.8" r="36" fill="url(#rm22)"/>
<linearGradient id="st23" gradientUnits="userSpaceOnUse" x1="708.24" y1="444.85" x2="708.40" y2="459.51"><stop offset="0.000" stop-color="#e60808"/><stop offset="0.071" stop-color="#ff0a0a"/><stop offset="0.143" stop-color="#ff0c0c"/><stop offset="0.214" stop-color="#ff2c2c"/><stop offset="0.286" stop-color="#ff6e6e"/><stop offset="0.357" stop-color="#ff7171"/><stop offset="0.429" stop-color="#ff3434"/><stop offset="0.500" stop-color="#ff1010"/><stop offset="0.571" stop-color="#e30808"/><stop offset="0.643" stop-color="#c80707"/><stop offset="0.714" stop-color="#a90606"/><stop offset="0.786" stop-color="#860404"/><stop offset="0.857" stop-color="#5c0303"/><stop offset="0.929" stop-color="#280101"/><stop offset="1.000" stop-color="#180101"/></linearGradient>
<polygon points="670.08,460.20 746.71,458.83 746.56,444.70 669.92,445.00" fill="url(#st23)"/>
<linearGradient id="st24" gradientUnits="userSpaceOnUse" x1="772.24" y1="444.60" x2="772.39" y2="458.37"><stop offset="0.000" stop-color="#0bca0b"/><stop offset="0.071" stop-color="#0eff0e"/><stop offset="0.143" stop-color="#11ff11"/><stop offset="0.214" stop-color="#31ff31"/><stop offset="0.286" stop-color="#73ff73"/><stop offset="0.357" stop-color="#75ff75"/><stop offset="0.429" stop-color="#39ff39"/><stop offset="0.500" stop-color="#14e314"/><stop offset="0.571" stop-color="#0cc70c"/><stop offset="0.643" stop-color="#0aaf0a"/><stop offset="0.714" stop-color="#089508"/><stop offset="0.786" stop-color="#077607"/><stop offset="0.857" stop-color="#055105"/><stop offset="0.929" stop-color="#022302"/><stop offset="1.000" stop-color="#011601"/></linearGradient>
<polygon points="746.01,458.84 798.77,457.90 798.63,444.50 745.86,444.71" fill="url(#st24)"/>
<radialGradient id="sp25" gradientUnits="userSpaceOnUse" cx="807.24" cy="655.73" r="64.23"><stop offset="0" stop-color="#ffffbf"/><stop offset="0.12" stop-color="#e0e00a"/><stop offset="0.22" stop-color="#c5c500"/><stop offset="0.35" stop-color="#a5a500"/><stop offset="0.47" stop-color="#7c7c00"/><stop offset="0.58" stop-color="#545400"/><stop offset="0.68" stop-color="#2f2f00"/><stop offset="0.76" stop-color="#191900"/><stop offset="0.85" stop-color="#131300"/><stop offset="1" stop-color="#131300"/></radialGradient><circle cx="795.5" cy="659.4" r="36.7" fill="url(#sp25)"/><radialGradient id="rm26" gradientUnits="userSpaceOnUse" cx="795.5" cy="659.4" r="36.7" fx="815.68" fy="641.05"><stop offset="0" stop-color="#4b4b00" stop-opacity="0"/><stop offset="0.72" stop-color="#4b4b00" stop-opacity="0"/><stop offset="0.92" stop-color="#4b4b00" stop-opacity="0.4"/><stop offset="1" stop-color="#4b4b00" stop-opacity="0.55"/></radialGradient><circle cx="795.5" cy="659.4" r="36.7" fill="url(#rm26)"/>
<linearGradient id="st27" gradientUnits="userSpaceOnUse" x1="834.52" y1="634.89" x2="839.14" y2="647.36"><stop offset="0.000" stop-color="#4f4f02"/><stop offset="0.071" stop-color="#787802"/><stop offset="0.143" stop-color="#838303"/><stop offset="0.214" stop-color="#898903"/><stop offset="0.286" stop-color="#8e8e07"/><stop offset="0.357" stop-color="#94940e"/><stop offset="0.429" stop-color="#90900e"/><stop offset="0.500" stop-color="#858507"/><stop offset="0.571" stop-color="#7a7a03"/><stop offset="0.643" stop-color="#707002"/><stop offset="0.714" stop-color="#656502"/><stop offset="0.786" stop-color="#575702"/><stop offset="0.857" stop-color="#464601"/><stop offset="0.929" stop-color="#2f2f01"/><stop offset="1.000" stop-color="#0b0b00"/></linearGradient>
<polygon points="827.31,651.74 850.96,642.98 846.35,630.51 822.69,639.26" fill="url(#st27)"/>
<linearGradient id="st28" gradientUnits="userSpaceOnUse" x1="859.19" y1="625.76" x2="863.81" y2="638.23"><stop offset="0.000" stop-color="#610303"/><stop offset="0.071" stop-color="#930505"/><stop offset="0.143" stop-color="#a10505"/><stop offset="0.214" stop-color="#a70606"/><stop offset="0.286" stop-color="#ad0a0a"/><stop offset="0.357" stop-color="#b31111"/><stop offset="0.429" stop-color="#ae1111"/><stop offset="0.500" stop-color="#a10a0a"/><stop offset="0.571" stop-color="#950606"/><stop offset="0.643" stop-color="#890505"/><stop offset="0.714" stop-color="#7b0404"/><stop offset="0.786" stop-color="#6a0303"/><stop offset="0.857" stop-color="#550303"/><stop offset="0.929" stop-color="#390202"/><stop offset="1.000" stop-color="#0d0000"/></linearGradient>
<polygon points="850.31,643.23 877.31,633.24 872.69,620.76 845.69,630.75" fill="url(#st28)"/>
<linearGradient id="st29" gradientUnits="userSpaceOnUse" x1="786.81" y1="530.06" x2="778.19" y2="542.94"><stop offset="0.000" stop-color="#ff0909"/><stop offset="0.071" stop-color="#ff0a0a"/><stop offset="0.143" stop-color="#ff1616"/><stop offset="0.214" stop-color="#ff5656"/><stop offset="0.286" stop-color="#ff7b7b"/><stop offset="0.357" stop-color="#ff4747"/><stop offset="0.429" stop-color="#fe1616"/><stop offset="0.500" stop-color="#d90808"/><stop offset="0.571" stop-color="#bd0606"/><stop offset="0.643" stop-color="#9e0505"/><stop offset="0.714" stop-color="#7d0404"/><stop offset="0.786" stop-color="#580303"/><stop offset="0.857" stop-color="#2e0202"/><stop offset="0.929" stop-color="#180101"/><stop offset="1.000" stop-color="#180101"/></linearGradient>
<polygon points="675.55,474.65 880.83,611.24 889.17,598.76 684.45,461.35" fill="url(#st29)"/>
<radialGradient id="sp30" gradientUnits="userSpaceOnUse" cx="663.66" cy="443.62" r="49.30"><stop offset="0" stop-color="#ff7e7e"/><stop offset="0.12" stop-color="#ff3333"/><stop offset="0.22" stop-color="#ff1313"/><stop offset="0.35" stop-color="#ff0e0e"/><stop offset="0.47" stop-color="#bf0b0b"/><stop offset="0.58" stop-color="#800707"/><stop offset="0.68" stop-color="#460404"/><stop offset="0.76" stop-color="#230202"/><stop offset="0.85" stop-color="#1a0101"/><stop offset="1" stop-color="#1a0101"/></radialGradient><circle cx="658.9" cy="454.5" r="34" fill="url(#sp30)"/><radialGradient id="rm31" gradientUnits="userSpaceOnUse" cx="658.9" cy="454.5" r="34" fx="677.60" fy="437.50"><stop offset="0" stop-color="#660606" stop-opacity="0"/><stop offset="0.72" stop-color="#660606" stop-opacity="0"/><stop offset="0.92" stop-color="#660606" stop-opacity="0.4"/><stop offset="1" stop-color="#660606" stop-opacity="0.55"/></radialGradient><circle cx="658.9" cy="454.5" r="34" fill="url(#rm31)"/>
<radialGradient id="sp32" gradientUnits="userSpaceOnUse" cx="915.53" cy="609.99" r="48.43"><stop offset="0" stop-color="#ff7e7e"/><stop offset="0.12" stop-color="#ff3333"/><stop offset="0.22" stop-color="#ff1313"/><stop offset="0.35" stop-color="#ff0e0e"/><stop offset="0.47" stop-color="#bf0b0b"/><stop offset="0.58" stop-color="#800707"/><stop offset="0.68" stop-color="#460404"/><stop offset="0.76" stop-color="#230202"/><stop offset="0.85" stop-color="#1a0101"/><stop offset="1" stop-color="#1a0101"/></radialGradient><circle cx="900.5" cy="616" r="33.4" fill="url(#sp32)"/><radialGradient id="rm33" gradientUnits="userSpaceOnUse" cx="900.5" cy="616" r="33.4" fx="918.87" fy="599.30"><stop offset="0" stop-color="#660606" stop-opacity="0"/><stop offset="0.72" stop-color="#660606" stop-opacity="0"/><stop offset="0.92" stop-color="#660606" stop-opacity="0.4"/><stop offset="1" stop-color="#660606" stop-opacity="0.55"/></radialGradient><circle cx="900.5" cy="616" r="33.4" fill="url(#rm33)"/>
<radialGradient id="sp34" gradientUnits="userSpaceOnUse" cx="756.02" cy="688.52" r="72.62"><stop offset="0" stop-color="#ffffbf"/><stop offset="0.12" stop-color="#e0e00a"/><stop offset="0.22" stop-color="#c5c500"/><stop offset="0.35" stop-color="#a5a500"/><stop offset="0.47" stop-color="#7c7c00"/><stop offset="0.58" stop-color="#545400"/><stop offset="0.68" stop-color="#2f2f00"/><stop offset="0.76" stop-color="#191900"/><stop offset="0.85" stop-color="#131300"/><stop offset="1" stop-color="#131300"/></radialGradient><circle cx="744.4" cy="690.6" r="41.5" fill="url(#sp34)"/><radialGradient id="rm35" gradientUnits="userSpaceOnUse" cx="744.4" cy="690.6" r="41.5" fx="767.23" fy="669.85"><stop offset="0" stop-color="#4b4b00" stop-opacity="0"/><stop offset="0.72" stop-color="#4b4b00" stop-opacity="0"/><stop offset="0.92" stop-color="#4b4b00" stop-opacity="0.4"/><stop offset="1" stop-color="#4b4b00" stop-opacity="0.55"/></radialGradient><circle cx="744.4" cy="690.6" r="41.5" fill="url(#rm35)"/><g>
<path d="M430 729 L409 724.5" stroke="#1ad21a" stroke-width="3.2"/>
<path d="M397 722.3 L409.5 718.6 L408.3 729.6 Z" fill="#10c010"/>
<path d="M419.6 731.7 L424.7 737.1" stroke="#4a4af0" stroke-width="2.6"/>
<path d="M430 729 L425 752" stroke="#ee1c1c" stroke-width="3.4"/>
<path d="M418.8 750.5 L430 752.5 L422.5 763 Z" fill="#c80e0e"/>
<rect x="428.5" y="727" width="3" height="4" fill="#f02020"/>
</g></svg>
</body></html>
